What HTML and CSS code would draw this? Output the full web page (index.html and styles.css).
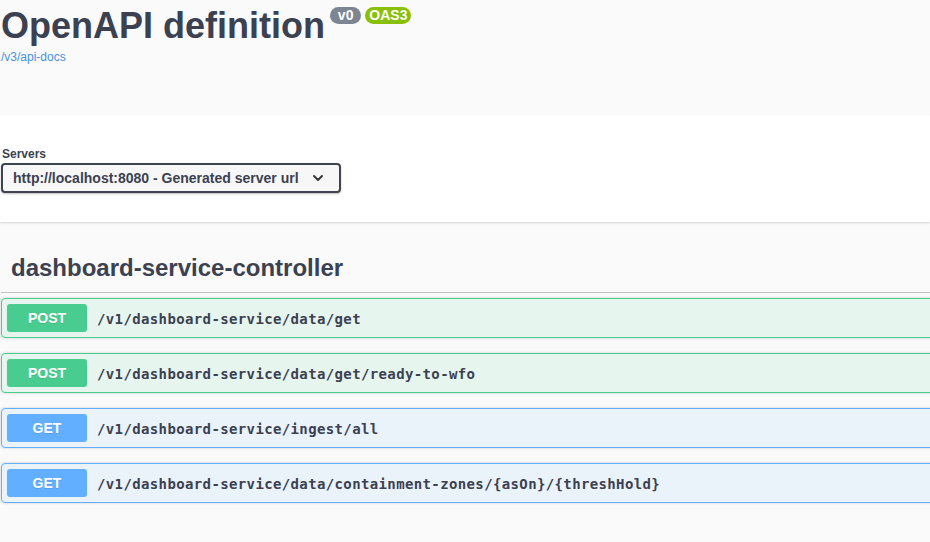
FILE: index.html
```html
<!DOCTYPE html>
<html lang="en">
<head>
<meta charset="utf-8">
<title>Swagger UI</title>
<link rel="stylesheet" href="styles.css">
</head>
<body>
<div class="page">
  <section class="info">
    <div class="title-row">
      <h2 class="title">OpenAPI definition</h2>
      <div class="stamps">
        <span class="stamp stamp-version"> v0 </span>
        <span class="stamp stamp-oas">OAS3</span>
      </div>
    </div>
    <a class="spec-link" href="#">/v3/api-docs</a>
  </section>

  <section class="scheme-container">
    <div class="servers">
      <span class="servers-label">Servers</span>
      <div class="server-select">
        <span class="server-text">http://localhost:8080 - Generated server url</span>
        <svg class="chevron" width="10" height="6" viewBox="0 0 10 6"><polyline points="1,1 5,5 9,1" fill="none" stroke="#303030" stroke-width="1.8" stroke-linecap="round" stroke-linejoin="round"/></svg>
      </div>
    </div>
  </section>

  <section class="tag-section">
    <h3 class="tag-title">dashboard-service-controller</h3>
    <div class="opblock opblock-post">
      <span class="method method-post">POST</span>
      <span class="path">/v1/dashboard-service/data/get</span>
    </div>
    <div class="opblock opblock-post">
      <span class="method method-post">POST</span>
      <span class="path">/v1/dashboard-service/data/get/ready-to-wfo</span>
    </div>
    <div class="opblock opblock-get">
      <span class="method method-get">GET</span>
      <span class="path">/v1/dashboard-service/ingest/all</span>
    </div>
    <div class="opblock opblock-get">
      <span class="method method-get">GET</span>
      <span class="path">/v1/dashboard-service/data/containment-zones/{asOn}/{threshHold}</span>
    </div>
  </section>
</div>
</body>
</html>
```
FILE: styles.css
```css
html, body {
  margin: 0;
  padding: 0;
  overflow: hidden;
}
body {
  background: #fafafa;
  font-family: "Liberation Sans", Arial, sans-serif;
  color: #3b4151;
  width: 930px;
  height: 542px;
}
.page {
  width: 100%;
}
.info {
  height: 115px;
  box-sizing: border-box;
  padding: 5px 0 0 1px;
}
.title-row {
  display: flex;
  align-items: flex-start;
}
.title {
  margin: 0;
  font-size: 36px;
  line-height: 42px;
  font-weight: 700;
  color: #3b4151;
}
.stamps {
  display: flex;
  gap: 4px;
  margin: 2px 0 0 5px;
}
.stamp {
  display: inline-block;
  white-space: pre;
  font-size: 14px;
  line-height: 15px;
  font-weight: 700;
  color: #fff;
  padding: 1px 4px 1px;
  border-radius: 57px;
}
.stamp-version {
  background: #7d8492;
}
.stamp-oas {
  background: #89bf04;
}
.spec-link {
  display: inline-block;
  margin-top: 1px;
  font-size: 12px;
  line-height: 15px;
  color: #4990e2;
  text-decoration: none;
}
.scheme-container {
  background: #fff;
  box-shadow: 0 1px 2px 0 rgba(0, 0, 0, 0.15);
  height: 107px;
  box-sizing: border-box;
  padding: 32px 0 0 1px;
}
.servers {
  display: flex;
  flex-direction: column;
  align-items: flex-start;
}
.servers-label {
  font-size: 12px;
  line-height: 15px;
  font-weight: 700;
  margin-bottom: 1px;
  padding-left: 1px;
}
.server-select {
  display: flex;
  align-items: center;
  width: 340px;
  height: 30px;
  box-sizing: border-box;
  border: 2px solid #41444e;
  border-radius: 4px;
  background: #f7f7f7;
  box-shadow: 0 1px 2px 0 rgba(0, 0, 0, 0.25);
  padding: 0 16px 0 10px;
}
.server-text {
  flex: 1;
  font-size: 14px;
  font-weight: 700;
  color: #3b4151;
  white-space: nowrap;
}
.chevron {
  flex: none;
}
.tag-section {
  width: 1200px;
  padding: 0 0 0 1px;
}
.tag-title {
  margin: 19px 0 5px;
  padding: 11px 20px 9px 10px;
  font-size: 24px;
  line-height: 31px;
  font-weight: 700;
  color: #3b4151;
  border-bottom: 1px solid rgba(59, 65, 81, 0.3);
}
.opblock {
  display: flex;
  align-items: center;
  height: 40px;
  box-sizing: border-box;
  padding: 0 5px;
  margin-bottom: 15px;
  border: 1px solid;
  border-radius: 4px;
  box-shadow: 0 0 3px rgba(0, 0, 0, 0.19);
}
.opblock-post {
  background: rgba(73, 204, 144, 0.1);
  border-color: #49cc90;
}
.opblock-get {
  background: rgba(97, 175, 254, 0.1);
  border-color: #61affe;
}
.method {
  min-width: 80px;
  height: 28px;
  line-height: 28px;
  text-align: center;
  font-size: 14px;
  font-weight: 700;
  color: #fff;
  border-radius: 3px;
  text-shadow: 0 1px 0 rgba(0, 0, 0, 0.1);
}
.method-post {
  background: #49cc90;
}
.method-get {
  background: #61affe;
}
.path {
  padding: 1px 10px 0;
  font-family: "DejaVu Sans Mono", "Liberation Mono", monospace;
  font-size: 14px;
  letter-spacing: 0.37px;
  font-weight: 700;
  color: #3b4151;
  white-space: nowrap;
}
```
